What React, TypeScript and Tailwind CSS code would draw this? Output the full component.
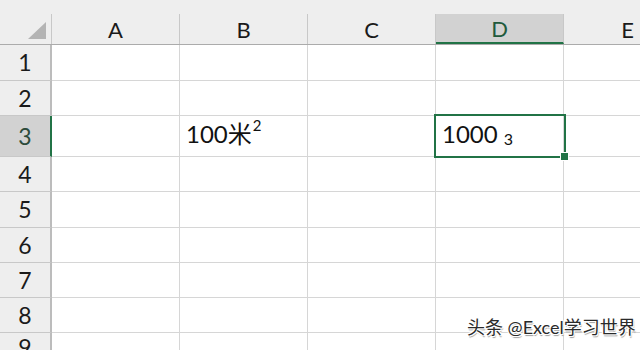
const COLS = ['A', 'B', 'C', 'D', 'E'];
// row heights including the 1px bottom gridline
const ROWS = [36, 35, 41, 35, 36, 35, 35, 35, 30];

const font = { fontFamily: 'Lato, "Noto Sans CJK SC", sans-serif' };

const Corner = () => (
  <div className="w-[52px] shrink-0 border-r border-[#c8c8c8] relative">
    <svg className="absolute left-[28px] top-[8px]" width="18" height="17" viewBox="0 0 18 17">
      <polygon points="18,0 18,17 0,17" fill="#b4b4b4" />
    </svg>
  </div>
);

const CellContent = ({ row, col }: { row: number; col: string }) => {
  if (row === 3 && col === 'B') {
    return (
      <span className="pl-[6px] pt-[6px] text-[24px] text-[#111] leading-none flex items-start">
        100米<span className="text-[15px] -mt-[4px] ml-[1px]">2</span>
      </span>
    );
  }
  if (row === 3 && col === 'D') {
    return (
      <span className="pl-[6px] pt-[6px] text-[24px] text-[#111] leading-none flex items-start">
        1000<span className="text-[16px] mt-[9px] ml-[6px]">3</span>
      </span>
    );
  }
  return null;
};

export default function App() {
  return (
    <div className="w-[640px] h-[350px] overflow-hidden bg-white relative select-none" style={font}>
      {/* toolbar strip above headers */}
      <div className="h-[14px] bg-[#eeeeee]" />

      {/* column header row */}
      <div className="flex h-[31px] bg-[#eeeeee] border-b border-[#ababab]">
        <Corner />
        {COLS.map((c) => (
          <div
            key={c}
            className={
              c === 'D'
                ? 'w-[128px] shrink-0 border-r border-[#c8c8c8] bg-[#d2d2d2] border-b-2 border-b-[#217346] flex items-center justify-center pt-[2px] text-[22px] text-[#215a3c] leading-none'
                : 'w-[128px] shrink-0 border-r border-[#c8c8c8] flex items-center justify-center pt-[2px] text-[22px] text-[#1a1a1a] leading-none'
            }
          >
            {c}
          </div>
        ))}
      </div>

      {/* grid rows */}
      {ROWS.map((h, i) => {
        const r = i + 1;
        return (
          <div key={r} className="flex" style={{ height: h }}>
            <div
              className={
                r === 3
                  ? 'w-[52px] shrink-0 bg-[#d2d2d2] border-r-2 border-[#217346] border-b border-b-[#c8c8c8] flex items-center justify-center text-[23px] text-[#2c4a3a] leading-none'
                  : 'w-[52px] shrink-0 bg-[#eeeeee] border-r-2 border-[#bcbcbc] border-b border-b-[#c8c8c8] flex items-center justify-center text-[23px] text-[#1a1a1a] leading-none'
              }
            >
              {r}
            </div>
            {COLS.map((c) => (
              <div key={c} className="w-[128px] shrink-0 border-r border-b border-[#d6d6d6] flex items-start">
                <CellContent row={r} col={c} />
              </div>
            ))}
          </div>
        );
      })}

      {/* active cell D3 */}
      <div className="absolute left-[434px] top-[114px] w-[132px] h-[44px] border-2 border-[#217346]" />
      <div className="absolute left-[560px] top-[152px] w-[9px] h-[9px] bg-[#217346] border border-white" />

      {/* watermark */}
      <div
        className="absolute left-[467px] top-[318px] text-[18px] text-[#2a2a2a] whitespace-nowrap leading-none"
        style={{ textShadow: '1px 1px 0 #fff, -1px -1px 0 #fff, 1px -1px 0 #fff, -1px 1px 0 #fff, 1px 2px 1px #999' }}
      >
        头条 @Excel学习世界
      </div>
    </div>
  );
}
